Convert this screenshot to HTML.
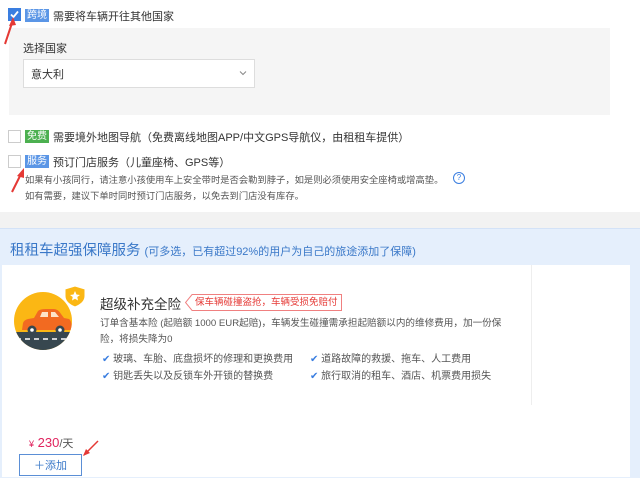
<!DOCTYPE html>
<html><head><meta charset="utf-8"><style>
body{margin:0;width:640px;height:477px;overflow:hidden;background:#fff;font-family:"Liberation Sans","Noto Sans CJK SC",sans-serif;position:relative;color:#333}
.a{position:absolute;white-space:nowrap}
.cb{position:absolute;width:11px;height:11px;border:1px solid #ccc;background:#fff}
.tag{position:absolute;height:13px;line-height:13px;font-size:10px;color:#fff;padding:0 2px}
.t{font-size:11px;color:#333}
.s{font-size:9.3px;color:#555}
</style></head><body>
<div class="cb" style="left:8px;top:8px;background:#3a7ee0;border-color:#3a7ee0"></div>
<svg class="a" style="left:8px;top:8px" width="13" height="13"><path d="M3 6.5 L5.5 9 L10 3.5" stroke="#fff" stroke-width="1.8" fill="none"/></svg>
<div class="tag" style="left:25px;top:9px;background:#5b96e6">跨境</div>
<div class="a t" style="left:53px;top:8px">需要将车辆开往其他国家</div>
<div class="a" style="left:9px;top:28px;width:601px;height:87px;background:#f5f5f5"></div>
<div class="a t" style="left:23px;top:40px">选择国家</div>
<div class="a" style="left:23px;top:59px;width:230px;height:27px;border:1px solid #ddd;background:#fff"></div>
<div class="a t" style="left:31px;top:66px">意大利</div>
<svg class="a" style="left:239px;top:70px" width="8" height="6"><path d="M1 1.5 L4 4.5 L7 1.5" stroke="#888" fill="none"/></svg>
<div class="cb" style="left:8px;top:130px"></div>
<div class="tag" style="left:25px;top:130px;background:#4cb050">免费</div>
<div class="a t" style="left:53px;top:129px">需要境外地图导航（免费离线地图APP/中文GPS导航仪，由租租车提供）</div>
<div class="cb" style="left:8px;top:155px"></div>
<div class="tag" style="left:25px;top:155px;background:#5b96e6">服务</div>
<div class="a t" style="left:53px;top:154px">预订门店服务（儿童座椅、GPS等）</div>
<div class="a s" style="left:25px;top:172px">如果有小孩同行，请注意小孩使用车上安全带时是否会勒到脖子，如是则必须使用安全座椅或增高垫。</div>
<div class="a" style="left:453px;top:172px;width:10px;height:10px;border:1px solid #3a7ee0;border-radius:50%;font-size:8px;line-height:10px;text-align:center;color:#3a7ee0">?</div>
<div class="a s" style="left:25px;top:188px">如有需要，建议下单时同时预订门店服务，以免去到门店没有库存。</div>
<svg class="a" style="left:0;top:0" width="640" height="477">
<path d="M5 44 L13 20" stroke="#e53935" stroke-width="2"/><path d="M13 17 L9 26 L16 25Z" fill="#e53935"/>
<path d="M12 192 L22 172" stroke="#e53935" stroke-width="2"/><path d="M24 168 L17 176 L24 178Z" fill="#e53935"/>
</svg>
<div class="a" style="left:0;top:212px;width:640px;height:16px;background:#f2f2f2"></div>
<div class="a" style="left:0;top:228px;width:640px;height:249px;background:#e5effc;border-top:1px solid #d3e2f7"></div>
<div class="a" style="left:10px;top:239px;font-size:14.5px;color:#3a78c8">租租车超强保障服务 <span style="font-size:11px">(可多选，已有超过92%的用户为自己的旅途添加了保障)</span></div>
<div class="a" style="left:2px;top:265px;width:628px;height:212px;background:#fff"></div>
<div class="a" style="left:531px;top:265px;width:1px;height:140px;background:#eee"></div>
<svg class="a" style="left:10px;top:284px" width="80" height="75">
<defs><clipPath id="c"><circle cx="33" cy="37" r="29"/></clipPath></defs>
<g clip-path="url(#c)">
<rect x="0" y="0" width="80" height="75" fill="#fbb714"/>
<rect x="0" y="48" width="80" height="30" fill="#37474f"/>
<path d="M6 55 h5 M15 55 h5 M24 55 h5 M33 55 h5 M42 55 h5 M51 55 h5 M60 55 h5" stroke="#fff" stroke-width="1.5"/>
<path d="M12 46 L13 39 Q14 36 18 35 L24 34 L28 27 Q30 25 36 25 L44 25 Q48 25 51 30 L54 34 L59 35 Q62 37 62 46Z" fill="#f26a21"/>
<path d="M30 33 L32 28 L38 28 L38 33Z M41 28 L45 28 L49 33 L41 33Z" fill="#fde3c8"/>
<circle cx="22" cy="46" r="4.5" fill="#37474f"/><circle cx="50" cy="46" r="4.5" fill="#37474f"/>
<circle cx="22" cy="46" r="1.8" fill="#fff"/><circle cx="50" cy="46" r="1.8" fill="#fff"/>
</g>
<path d="M65 2 L75 5 L75 12 Q75 19 65 23 Q55 19 55 12 L55 5Z" fill="#fbb714" stroke="#fff" stroke-width="1"/>
<path d="M65 7 L66.5 10.5 L70 11 L67.3 13 L68 16.5 L65 14.7 L62 16.5 L62.7 13 L60 11 L63.5 10.5Z" fill="#fff"/>
</svg>
<div class="a" style="left:100px;top:293px;font-size:13.5px;color:#333">超级补充全险</div>
<div class="a" style="left:192px;top:294px;height:15px;line-height:15px;border:1px solid #f08080;border-left:none;padding:0 3px 0 3px;font-size:9.5px;color:#e53935">保车辆碰撞盗抢，车辆受损免赔付</div>
<svg class="a" style="left:185px;top:294px" width="8" height="17"><path d="M7.5 0 L0.5 8.5 L7.5 17" stroke="#f08080" fill="#fff"/></svg>
<div class="a s" style="left:100px;top:316px;line-height:16px;font-size:9.6px">订单含基本险 (起赔额 1000 EUR起赔)，车辆发生碰撞需承担起赔额以内的维修费用，加一份保<br>险，将损失降为0</div>
<div class="a s" style="left:102px;top:351px;line-height:17px;font-size:10px"><span style="color:#3a7ee0">✔</span> 玻璃、车胎、底盘损坏的修理和更换费用<br><span style="color:#3a7ee0">✔</span> 钥匙丢失以及反锁车外开锁的替换费</div>
<div class="a s" style="left:310px;top:351px;line-height:17px;font-size:10px"><span style="color:#3a7ee0">✔</span> 道路故障的救援、拖车、人工费用<br><span style="color:#3a7ee0">✔</span> 旅行取消的租车、酒店、机票费用损失</div>
<div class="a" style="left:29px;top:435px;font-size:13px;color:#e0245e"><span style="font-size:9px">¥</span> 230<span style="color:#555;font-size:11px">/天</span></div>
<div class="a" style="left:19px;top:454px;width:63px;height:22px;border:1px solid #5b8fd6;font-size:11px;line-height:22px;text-align:center;color:#3a78c8;box-sizing:border-box">＋添加</div>
<svg class="a" style="left:82px;top:438px" width="20" height="20"><path d="M2 17 L16 3" stroke="#e53935" stroke-width="1.5"/><path d="M1 18 L4 11 L8 15Z" fill="#e53935"/></svg>
</body></html>
